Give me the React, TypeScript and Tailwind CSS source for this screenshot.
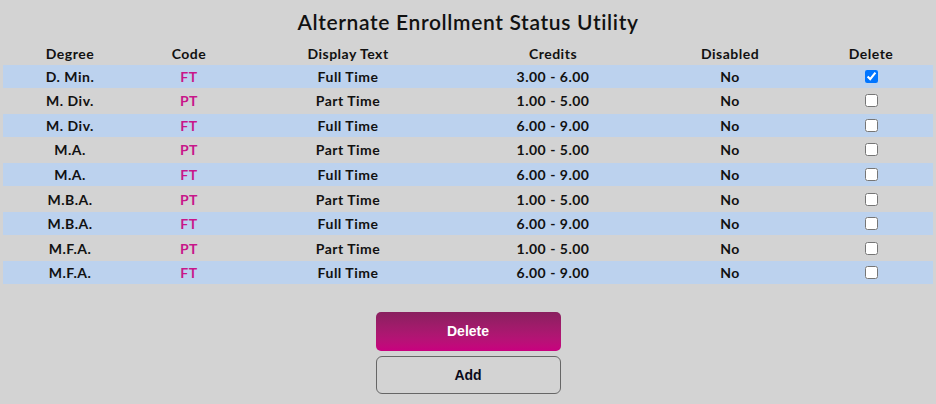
import React from "react";

const rows = [
  { degree: "D. Min.", code: "FT", text: "Full Time", credits: "3.00 - 6.00", checked: true },
  { degree: "M. Div.", code: "PT", text: "Part Time", credits: "1.00 - 5.00" },
  { degree: "M. Div.", code: "FT", text: "Full Time", credits: "6.00 - 9.00" },
  { degree: "M.A.", code: "PT", text: "Part Time", credits: "1.00 - 5.00" },
  { degree: "M.A.", code: "FT", text: "Full Time", credits: "6.00 - 9.00" },
  { degree: "M.B.A.", code: "PT", text: "Part Time", credits: "1.00 - 5.00" },
  { degree: "M.B.A.", code: "FT", text: "Full Time", credits: "6.00 - 9.00" },
  { degree: "M.F.A.", code: "PT", text: "Part Time", credits: "1.00 - 5.00" },
  { degree: "M.F.A.", code: "FT", text: "Full Time", credits: "6.00 - 9.00" },
];

const cols = "grid grid-cols-[134px_104px_214px_196px_158px_124px] items-center text-center";

export default function App() {
  return (
    <div className="w-[936px] h-[404px] bg-[#d3d3d3] text-[#111] font-['Lato',sans-serif] overflow-hidden">
      <h1 className="pt-[9px] h-[40px] text-center text-[21px] tracking-[0.65px] font-semibold leading-[26px]">
        Alternate Enrollment Status Utility
      </h1>
      <div className="px-[3px] flex flex-col gap-[1.6px]">
        <div className={`${cols} h-[23px] pt-[3px] text-[14px] tracking-[0.5px] font-bold`}>
          <div>Degree</div>
          <div>Code</div>
          <div>Display Text</div>
          <div>Credits</div>
          <div>Disabled</div>
          <div>Delete</div>
        </div>
        {rows.map((r, i) => (
          <div
            key={i}
            className={`${cols} h-[23px] text-[14px] tracking-[0.5px] font-bold ${i % 2 === 0 ? "bg-[#bcd2ee]" : ""}`}
          >
            <div>{r.degree}</div>
            <div className="text-[#c8178a]">{r.code}</div>
            <div>{r.text}</div>
            <div>{r.credits}</div>
            <div>No</div>
            <div className="flex justify-center">
              <input type="checkbox" defaultChecked={!!r.checked} className="w-[13px] h-[13px] m-0" />
            </div>
          </div>
        ))}
      </div>
      <div className="flex flex-col items-center gap-[5px] mt-[28px]">
        <button className="w-[185px] h-[39px] rounded-[5px] bg-gradient-to-b from-[#89205f] to-[#c9007f] text-white font-bold text-[14px] font-['Liberation_Sans',Arial,sans-serif]">
          Delete
        </button>
        <button className="w-[185px] h-[38px] rounded-[6px] border-[1.5px] border-[#666] text-[#0a0a1a] font-bold text-[14px] font-['Liberation_Sans',Arial,sans-serif]">
          Add
        </button>
      </div>
    </div>
  );
}
